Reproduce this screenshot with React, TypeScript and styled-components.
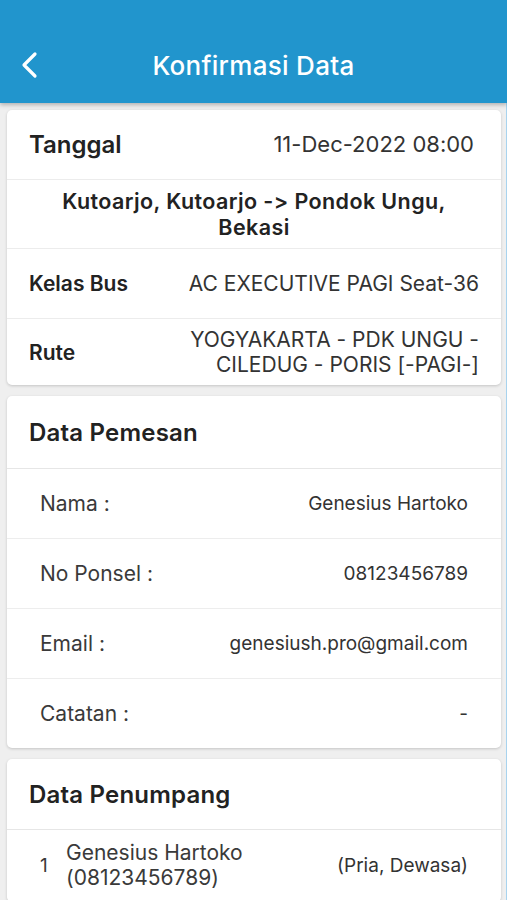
import styled, { createGlobalStyle } from "styled-components";

const GlobalStyle = createGlobalStyle`
  html, body {
    margin: 0;
    padding: 0;
    background: #efefef;
  }
  body {
    font-family: Inter, "Noto Sans", sans-serif;
    font-variant-ligatures: none;
    font-feature-settings: "calt" 0, "liga" 0;
    color: #222;
  }
`;

const Page = styled.div`
  width: 507px;
  height: 900px;
  overflow: hidden;
  background: #efefef;
`;

const Header = styled.header`
  height: 103px;
  background: #2195cd;
  box-shadow: 0 2px 4px rgba(0, 0, 0, 0.25);
  display: flex;
  align-items: flex-end;
  position: relative;
  z-index: 1;
`;

const HeaderBar = styled.div`
  height: 76px;
  width: 100%;
  display: flex;
  align-items: center;
  justify-content: center;
  position: relative;
`;

const BackButton = styled.button`
  position: absolute;
  left: 14px;
  top: 22px;
  width: 32px;
  height: 32px;
  border: none;
  background: none;
  padding: 0;
  display: flex;
  align-items: center;
  justify-content: center;
`;

const Title = styled.h1`
  margin: 0;
  color: #fff;
  font-size: 26px;
  font-weight: 500;
  letter-spacing: 0.3px;
`;

const Content = styled.main`
  padding: 7px 5px 0 7px;
  height: 900px;
  border-right: 1px solid #a8d3ee;
  display: flex;
  flex-direction: column;
  gap: 11px;
`;

const Card = styled.section`
  background: #fff;
  border-radius: 5px;
  box-shadow: 0 1px 3px rgba(0, 0, 0, 0.18);
  overflow: hidden;
`;

const Row = styled.div<{ $h?: number; $pr?: number }>`
  box-sizing: border-box;
  min-height: ${(p) => p.$h || 68}px;
  display: flex;
  align-items: center;
  justify-content: space-between;
  padding: 0 ${(p) => p.$pr || 22}px 0 22px;
  & + & {
    border-top: 1px solid #ececec;
  }
`;

const Label = styled.span<{ $size?: number }>`
  font-weight: 600;
  font-size: ${(p) => p.$size || 21}px;
  color: #222;
  white-space: nowrap;
`;

const Value = styled.span<{ $size?: number }>`
  font-size: ${(p) => p.$size || 21}px;
  color: #333;
  text-align: right;
  line-height: 25px;
`;

const CenterText = styled.div`
  flex: 1;
  text-align: center;
  font-weight: 600;
  font-size: 21.5px;
  letter-spacing: 0.4px;
  line-height: 26px;
  color: #222;
  padding: 8px 24px;
`;

const SectionTitle = styled.h2<{ $h: number }>`
  margin: 0;
  height: ${(p) => p.$h}px;
  display: flex;
  align-items: center;
  padding: 0 22px;
  font-size: 24px;
  font-weight: 600;
  letter-spacing: 0.2px;
  color: #222;
  border-bottom: 1px solid #e6e6e6;
`;

const InfoRow = styled.div`
  height: 69px;
  display: flex;
  align-items: center;
  justify-content: space-between;
  padding: 0 33px;
  font-size: 21px;
  color: #3a3a3a;
  & + & {
    border-top: 1px solid #ededed;
  }
`;

const InfoValue = styled.span`
  font-size: 19px;
  color: #333;
`;

const PassengerRow = styled.div`
  display: flex;
  align-items: center;
  padding: 10px 33px 12px;
  font-size: 21px;
  color: #3a3a3a;
  line-height: 25px;
`;

const PassengerNo = styled.span`
  width: 26px;
  font-size: 19px;
`;

const PassengerName = styled.div`
  flex: 1;
`;

const PassengerType = styled.span`
  font-size: 19px;
  color: #333;
`;

function ChevronLeft() {
  return (
    <svg width="20" height="28" viewBox="0 0 20 28" fill="none">
      <path d="M15 3 L4 14 L15 25" stroke="#fff" strokeWidth="3.2" strokeLinecap="round" strokeLinejoin="round" />
    </svg>
  );
}

const pemesan = [
  { label: "Nama :", value: "Genesius Hartoko" },
  { label: "No Ponsel :", value: "08123456789" },
  { label: "Email :", value: "genesiush.pro@gmail.com" },
  { label: "Catatan :", value: "-" },
];

export default function App() {
  return (
    <Page>
      <GlobalStyle />
      <Header>
        <HeaderBar>
          <BackButton aria-label="Kembali">
            <ChevronLeft />
          </BackButton>
          <Title>Konfirmasi Data</Title>
        </HeaderBar>
      </Header>
      <Content>
        <Card>
          <Row $h={69} $pr={27}>
            <Label $size={24}>Tanggal</Label>
            <Value $size={22}>11-Dec-2022 08:00</Value>
          </Row>
          <Row $h={69}>
            <CenterText>Kutoarjo, Kutoarjo -&gt; Pondok Ungu, Bekasi</CenterText>
          </Row>
          <Row $h={70}>
            <Label>Kelas Bus</Label>
            <Value>AC EXECUTIVE PAGI Seat-36</Value>
          </Row>
          <Row $h={67}>
            <Label>Rute</Label>
            <Value>
              YOGYAKARTA - PDK UNGU -<br />
              CILEDUG - PORIS [-PAGI-]
            </Value>
          </Row>
        </Card>
        <Card>
          <SectionTitle $h={72}>Data Pemesan</SectionTitle>
          {pemesan.map((item) => (
            <InfoRow key={item.label}>
              <span>{item.label}</span>
              <InfoValue>{item.value}</InfoValue>
            </InfoRow>
          ))}
        </Card>
        <Card>
          <SectionTitle $h={70}>Data Penumpang</SectionTitle>
          <PassengerRow>
            <PassengerNo>1</PassengerNo>
            <PassengerName>
              Genesius Hartoko
              <br />
              (08123456789)
            </PassengerName>
            <PassengerType>(Pria, Dewasa)</PassengerType>
          </PassengerRow>
        </Card>
      </Content>
    </Page>
  );
}
